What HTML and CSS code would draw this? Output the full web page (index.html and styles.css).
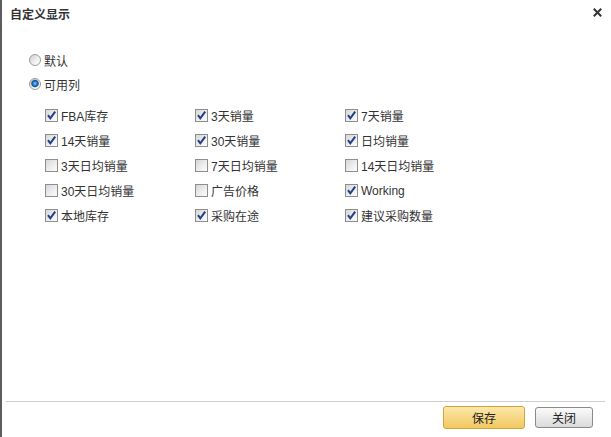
FILE: index.html
```html
<!DOCTYPE html>
<html lang="zh-CN">
<head>
    <meta charset="UTF-8">
    <title>自定义显示</title>
    <link rel="stylesheet" href="styles.css">
</head>
<body>
    <div class="dialog">
        <div class="dialog-header">
            <span class="dialog-title">自定义显示</span>
            <button class="close-x" type="button" aria-label="关闭">
                <svg width="9" height="9" viewBox="0 0 9 9">
                    <path d="M0.8 0.8 L8.2 8.2 M8.2 0.8 L0.8 8.2" stroke="#333" stroke-width="2" fill="none"/>
                </svg>
            </button>
        </div>

        <div class="dialog-body">
            <label class="radio-row"><input type="radio" name="mode"><span>默认</span></label>
            <label class="radio-row"><input type="radio" name="mode" checked><span>可用列</span></label>

            <div class="columns">
                <label class="opt"><input type="checkbox" checked><span>FBA库存</span></label>
                <label class="opt"><input type="checkbox" checked><span>3天销量</span></label>
                <label class="opt"><input type="checkbox" checked><span>7天销量</span></label>

                <label class="opt"><input type="checkbox" checked><span>14天销量</span></label>
                <label class="opt"><input type="checkbox" checked><span>30天销量</span></label>
                <label class="opt"><input type="checkbox" checked><span>日均销量</span></label>

                <label class="opt"><input type="checkbox"><span>3天日均销量</span></label>
                <label class="opt"><input type="checkbox"><span>7天日均销量</span></label>
                <label class="opt"><input type="checkbox"><span>14天日均销量</span></label>

                <label class="opt"><input type="checkbox"><span>30天日均销量</span></label>
                <label class="opt"><input type="checkbox"><span>广告价格</span></label>
                <label class="opt"><input type="checkbox" checked><span>Working</span></label>

                <label class="opt"><input type="checkbox" checked><span>本地库存</span></label>
                <label class="opt"><input type="checkbox" checked><span>采购在途</span></label>
                <label class="opt"><input type="checkbox" checked><span>建议采购数量</span></label>
            </div>
        </div>

        <div class="dialog-footer">
            <button type="button" class="btn btn-save">保存</button>
            <button type="button" class="btn btn-close">关闭</button>
        </div>
    </div>
</body>
</html>
```

FILE: styles.css
```css
body {
    margin: 0;
    font-family: "Liberation Sans", "Noto Sans CJK SC", sans-serif;
    font-size: 12px;
    color: #333;
    background-color: #fff;
}

.dialog {
    height: 437px;
    box-sizing: border-box;
    border-left: 2px solid #5c5c5c;
    display: flex;
    flex-direction: column;
}

/* Header */
.dialog-header {
    height: 30px;
    flex-shrink: 0;
    display: flex;
    justify-content: space-between;
    padding: 0 9px 0 8px;
}

.dialog-title {
    font-weight: bold;
    line-height: 30px;
    color: #333;
}

.close-x {
    margin-top: 8px;
    width: 9px;
    height: 9px;
    padding: 0;
    border: none;
    background: none;
    display: block;
    cursor: pointer;
}

.close-x svg {
    display: block;
}

/* Body */
.dialog-body {
    flex: 1;
    padding: 18px 0 0 27px;
}

.radio-row {
    display: flex;
    align-items: center;
    gap: 3px;
    height: 24px;
}

input[type="radio"] {
    appearance: none;
    margin: 0;
    width: 12px;
    height: 12px;
    border: 1px solid #9a9a9a;
    border-radius: 50%;
    box-sizing: border-box;
    background: linear-gradient(135deg, #cfcfcf, #f4f4f4 65%, #fff);
}

input[type="radio"]:checked {
    background:
        radial-gradient(circle at 50% 45%, #8fd0ff 0, #2f8ee0 1.6px, #0f4f97 3px, #5f7f9f 3.6px, transparent 4.2px),
        linear-gradient(135deg, #cfcfcf, #f4f4f4 65%, #fff);
}

.columns {
    margin: 7px 0 0 16px;
    display: grid;
    grid-template-columns: repeat(3, 150px);
}

.opt {
    display: flex;
    align-items: center;
    gap: 3px;
    height: 25px;
}

input[type="checkbox"] {
    appearance: none;
    margin: 0;
    width: 13px;
    height: 13px;
    box-sizing: border-box;
    border: 1px solid #8e8e8e;
    background: linear-gradient(135deg, #d6d6d6, #efefef 60%, #fbfbfb);
}

input[type="checkbox"]:checked {
    background:
        url("data:image/svg+xml,%3Csvg xmlns='http://www.w3.org/2000/svg' viewBox='0 0 11 11'%3E%3Cpath d='M2 5.2 L4.3 8.4 L9.2 1.6' fill='none' stroke='%23233f86' stroke-width='2'/%3E%3C/svg%3E") center / 11px 11px no-repeat,
        linear-gradient(135deg, #d6d6d6, #efefef 60%, #fbfbfb);
}

/* Footer */
.dialog-footer {
    height: 36px;
    flex-shrink: 0;
    box-sizing: border-box;
    margin: 0 6px 0 4px;
    border-top: 1px solid #cfcfcf;
    display: flex;
    justify-content: flex-end;
    align-items: flex-start;
    gap: 10px;
    padding: 4px 12px 0 0;
}

.btn {
    font-family: inherit;
    font-size: 12px;
    color: #222;
    padding: 0;
    border-radius: 3px;
    cursor: pointer;
}

.btn-save {
    width: 82px;
    height: 23px;
    border: 1px solid #d2a43c;
    background: linear-gradient(#fbe8aa, #f2c860);
}

.btn-close {
    margin-top: 1px;
    width: 58px;
    height: 21px;
    border: 1px solid #8a8a8a;
    background: linear-gradient(#fbfbfb, #dadada);
}
```
